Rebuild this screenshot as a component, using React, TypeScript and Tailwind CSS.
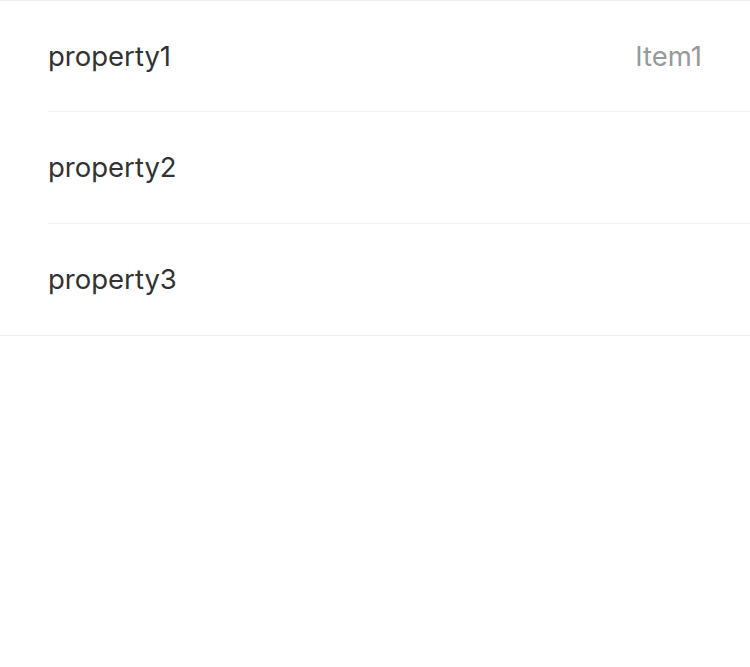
import React from 'react';

const items = [
  { label: 'property1', value: 'Item1' },
  { label: 'property2', value: '' },
  { label: 'property3', value: '' },
];

export default function App() {
  return (
    <div className="min-h-screen bg-white" style={{ fontFamily: 'Inter, "Noto Sans", sans-serif' }}>
      <div className="border-y border-[#eeeeee] bg-white">
        {items.map((item, i) => (
          <div key={i} className="pl-12">
            <div
              className={`flex h-[111.33px] items-center justify-between pr-12 ${
                i < items.length - 1 ? 'border-b border-[#f0f0f0]' : ''
              }`}
            >
              <span className="text-[27.5px] text-[#333333]">{item.label}</span>
              <span className="text-[27.5px] text-[#999999]">{item.value}</span>
            </div>
          </div>
        ))}
      </div>
    </div>
  );
}
